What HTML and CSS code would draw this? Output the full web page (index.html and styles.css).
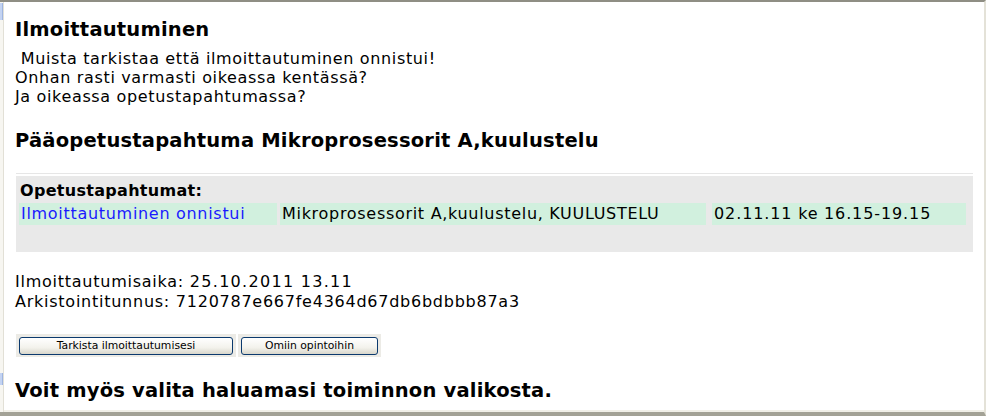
FILE: index.html
```html
<!DOCTYPE html>
<html lang="fi">
<head>
<meta charset="utf-8">
<title>Ilmoittautuminen</title>
<link rel="stylesheet" href="styles.css">
</head>
<body>
<div class="window">
  <div class="leftbar">
    <div class="lb-seg lb-top"></div>
    <div class="lb-space"></div>
    <div class="lb-seg lb-bot"></div>
  </div>
  <div class="content">
    <h1 class="title">Ilmoittautuminen</h1>
    <p class="notice">&nbsp;Muista tarkistaa että ilmoittautuminen onnistui!<br>Onhan rasti varmasti oikeassa kentässä?<br>Ja oikeassa opetustapahtumassa?</p>
    <h2 class="title main-event">Pääopetustapahtuma Mikroprosessorit A,kuulustelu</h2>
    <div class="rule"></div>
    <div class="events">
      <div class="events-head">Opetustapahtumat:</div>
      <div class="events-row">
        <div class="cell cell-status"><a class="status-link">Ilmoittautuminen onnistui</a></div>
        <div class="cell cell-name">Mikroprosessorit A,kuulustelu, KUULUSTELU</div>
        <div class="cell cell-time"><span class="num">02.11.11</span> ke <span class="num">16.15-19.15</span></div>
      </div>
    </div>
    <p class="meta">Ilmoittautumisaika: <span class="num">25.10.2011 13.11</span><br>Arkistointitunnus: 7120787e667fe4364d67db6bdbbb87a3</p>
    <div class="buttons">
      <div class="btn-cell"><button class="btn btn-check">Tarkista ilmoittautumisesi</button></div>
      <div class="btn-cell"><button class="btn btn-own">Omiin opintoihin</button></div>
    </div>
    <h2 class="title closing">Voit myös valita haluamasi toiminnon valikosta.</h2>
  </div>
</div>
</body>
</html>
```

FILE: styles.css
```css
html, body {
  margin: 0;
  padding: 0;
  background: #ffffff;
}

.window {
  box-sizing: border-box;
  width: 986px;
  height: 416px;
  display: flex;
  border-top: 2px solid #8f8e84;
  border-bottom: 4px solid #a3a296;
  border-right: 2px solid #e4e2d8;
  background: #ffffff;
  overflow: hidden;
  font-family: Verdana, "DejaVu Sans", sans-serif;
  color: #000;
}

.leftbar {
  width: 3px;
  flex: 0 0 3px;
  display: flex;
  flex-direction: column;
  border-right: 1px solid #e2e0d6;
  background: #f7f6f1;
}

.lb-seg {
  background: #c3d3f2;
  border-right: 1px solid #9fb5e0;
}

.lb-top {
  height: 17px;
  margin-top: 1px;
}

.lb-space {
  flex: 1;
}

.lb-bot {
  height: 12px;
  margin-bottom: 27px;
}

.content {
  flex: 1;
  padding: 17px 0 0 11px;
  box-shadow: inset 0 -2px 0 #f1f0e8;
}

.title {
  margin: 0;
  font-size: 19.5px;
  line-height: 22px;
  font-weight: bold;
  letter-spacing: 0.2px;
}

.notice {
  margin: 8px 0 0 0;
  font-size: 16px;
  line-height: 19px;
  letter-spacing: 0.65px;
}

.main-event {
  margin-top: 24px;
}

.rule {
  margin: 21px 0 0 1px;
  width: 957px;
  height: 1px;
  background: #e6e6e6;
}

.events {
  margin: 2px 0 0 1px;
  width: 957px;
  height: 76px;
  box-sizing: border-box;
  background: #e9e9e9;
  padding: 5px 0 0 3px;
}

.events-head {
  font-size: 16px;
  line-height: 19px;
  font-weight: bold;
  padding-left: 1px;
  letter-spacing: 0.3px;
}

.events-row {
  display: flex;
  margin-top: 3px;
  font-size: 16px;
  line-height: 22px;
  letter-spacing: 0.7px;
}

.cell {
  background: #d1f0de;
  padding-left: 2px;
  box-sizing: border-box;
  white-space: nowrap;
}

.cell-status {
  width: 258px;
}

.cell-name {
  width: 426px;
  margin-left: 3px;
}

.cell-time {
  width: 254px;
  margin-left: 6px;
}

.num {
  letter-spacing: 1.3px;
}

.cell-time .num {
  letter-spacing: 0.9px;
}

.status-link {
  color: #1a1aff;
  text-decoration: none;
}

.meta {
  margin: 20px 0 0 0;
  font-size: 16px;
  line-height: 20px;
  letter-spacing: 0.75px;
}

.buttons {
  display: flex;
  gap: 2px;
  margin-top: 22px;
  margin-left: 1px;
}

.btn-cell {
  background: #ecebe6;
  padding: 3px 3px 2px 3px;
}

.btn {
  display: block;
  height: 18px;
  padding: 0;
  font-family: Tahoma, "DejaVu Sans", sans-serif;
  font-size: 10.8px;
  line-height: 16px;
  color: #000;
  background: linear-gradient(#ffffff, #f3f2ec 60%, #d9d7cc);
  border: 1px solid #0c3a6e;
  border-radius: 3px;
}

.btn-check {
  width: 214px;
}

.btn-own {
  width: 137px;
}

.closing {
  margin-top: 23px;
}
```
